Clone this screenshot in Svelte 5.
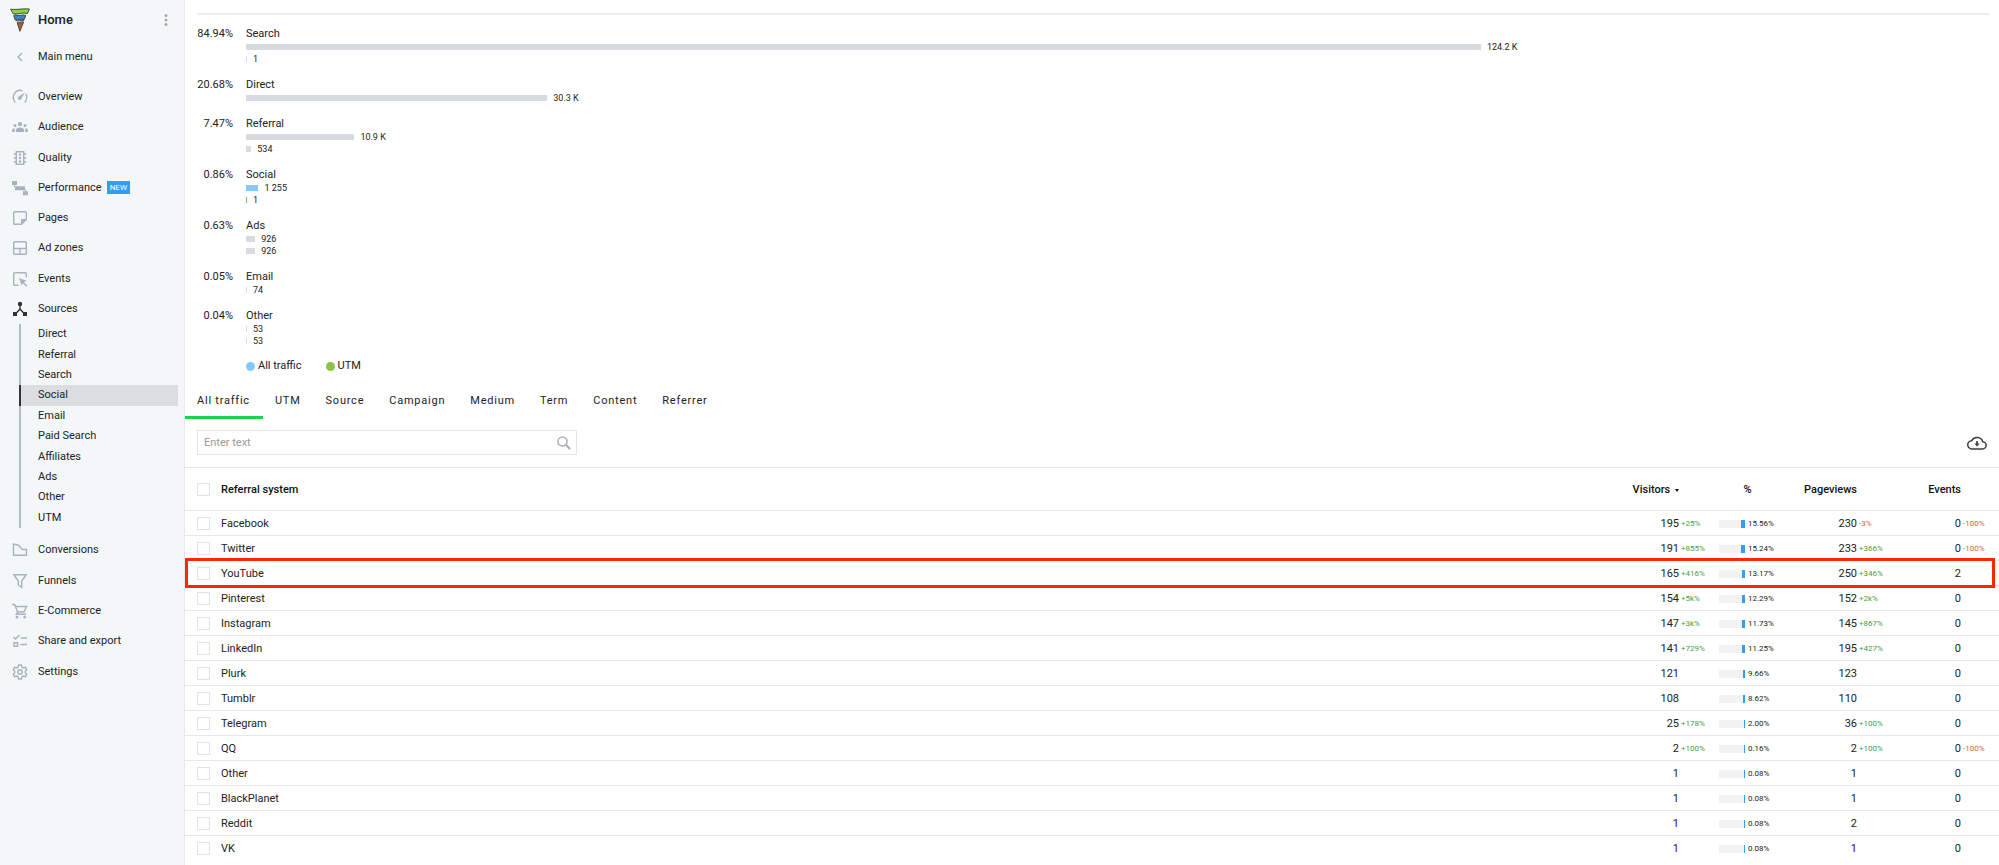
<script lang="ts">
  type Item = { label: string; icon: string; badge?: string };

  const topMenu: Item[] = [
    { label: "Overview", icon: "gauge" },
    { label: "Audience", icon: "people" },
    { label: "Quality", icon: "traffic" },
    { label: "Performance", icon: "steps", badge: "NEW" },
    { label: "Pages", icon: "page" },
    { label: "Ad zones", icon: "zones" },
    { label: "Events", icon: "cursor" },
    { label: "Sources", icon: "hub" },
  ];

  const sources = [
    "Direct",
    "Referral",
    "Search",
    "Social",
    "Email",
    "Paid Search",
    "Affiliates",
    "Ads",
    "Other",
    "UTM",
  ];

  const bottomMenu: Item[] = [
    { label: "Conversions", icon: "area" },
    { label: "Funnels", icon: "funnel" },
    { label: "E-Commerce", icon: "cart" },
    { label: "Share and export", icon: "checklist" },
    { label: "Settings", icon: "gear" },
  ];

  // line = stroked path, fill = solid path
  const icons: Record<string, { line?: string; fill?: string }> = {
    gauge: {
      line: "M3.4 13.4A7 7 0 0 1 10.6 1.8M13.7 4.6A7 7 0 0 1 12.6 13.4",
      fill: "M12.8 3.2 9.6 9.3A1.9 1.9 0 1 1 6.9 7.4Z",
    },
    people: {
      fill: "M8 3a2.1 2.1 0 1 1 0 4.2A2.1 2.1 0 0 1 8 3ZM3 5a1.5 1.5 0 1 1 0 3 1.5 1.5 0 0 1 0-3ZM13 5a1.5 1.5 0 1 1 0 3 1.5 1.5 0 0 1 0-3ZM3.8 13v-1.8C3.8 9.4 6 8.6 8 8.6s4.2.8 4.2 2.6V13ZM0 13v-1.6C0 10 1.4 9.3 3 9.3 2.6 10 2.6 11 2.6 13ZM16 13v-1.6C16 10 14.6 9.3 13 9.3c.4.7.4 1.7.4 3.7Z",
    },
    traffic: {
      line: "M4.3 1.7h7.4v12.6H4.3ZM1.8 4h2.5M1.8 8h2.5M1.8 12h2.5M11.7 4h2.5M11.7 8h2.5M11.7 12h2.5",
      fill: "M8 3.200a1.300 1.300 0 1 1 0 2.600 1.300 1.300 0 0 1 0-2.600ZM8 6.700a1.300 1.300 0 1 1 0 2.600 1.300 1.300 0 0 1 0-2.600ZM8 10.200a1.300 1.300 0 1 1 0 2.600 1.300 1.300 0 0 1 0-2.600Z",
    },
    steps: {
      fill: "M0 1h5v4H0ZM3 6.200h10v4H3ZM11 11.300h5v4h-5ZM2 5h1v2H2ZM13 9.500h1v2h-1Z",
    },
    page: {
      line: "M9.5 14.3H2.7a1 1 0 0 1-1-1V2.700a1 1 0 0 1 1-1h10.600a1 1 0 0 1 1 1v6.800Z",
      fill: "M9 9h6l-6 6Z",
    },
    zones: {
      line: "M2.7 1.7h10.6a1 1 0 0 1 1 1v10.6a1 1 0 0 1-1 1H2.700a1 1 0 0 1-1-1V2.700a1 1 0 0 1 1-1ZM1.700 8.500h12.600M8 8.500v5.800",
    },
    cursor: {
      line: "M6.500 14.300H2.700a1 1 0 0 1-1-1V2.700a1 1 0 0 1 1-1h10.600a1 1 0 0 1 1 1V6.500",
      fill: "M7 7l7.500 2.800-2.600 1.500L15.500 14.500l-1.200 1.200-3.300-3.500L9.700 14.700Z",
    },
    hub: {
      line: "M8 3v5L3.500 13M8 8l4.500 5",
      fill: "M8 .8a2.2 2.2 0 1 1 0 4.4A2.2 2.2 0 0 1 8 .8ZM1 11h4v4H1ZM11 11h4v4h-4Z",
    },
    area: {
      line: "M1.500 2v11.300h13V7.500H10.500C9 7.500 8.300 2.700 4.800 2.700Z",
    },
    funnel: {
      line: "M1.800 1.700h12.400L9.700 8v6.300L6.300 11.700V8Z",
    },
    cart: {
      line: "M0 1.500h2.600l3 7.500-1.400 2.300H14M3.500 3.500h11L12 9H5.600",
      fill: "M5 12.800a1.400 1.400 0 1 1 0 2.800 1.400 1.400 0 0 1 0-2.800ZM12.600 12.800a1.400 1.400 0 1 1 0 2.800 1.400 1.400 0 0 1 0-2.800Z",
    },
    checklist: {
      line: "M1.500 4l2 2L7.500 2M8.500 5H15M8.500 11.500H15M2 9.700h3.600v3.600H2Z",
    },
    gear: {
      line: "M6.600 1h2.800l.5 2 1.500.9 2-.6 1.400 2.400-1.500 1.500v1.600l1.500 1.500-1.400 2.400-2-.6-1.500.9-.5 2H6.600l-.5-2-1.500-.9-2 .6L1.200 10.300l1.500-1.500V7.200L1.200 5.700l1.400-2.400 2 .6L6.100 3ZM8 5.800a2.200 2.200 0 1 1 0 4.400 2.200 2.200 0 0 1 0-4.400Z",
    },
  };

  // longest bar takes this share of the track, in percent
  const BAR_SHARE = 70.85;
  const MAX_VALUE = 124200;

  type Bar = { value: number; text: string; kind?: string };
  const channels: { pct: string; name: string; bars: Bar[] }[] = [
    { pct: "84.94%", name: "Search", bars: [{ value: 124200, text: "124.2 K" }, { value: 1, text: "1" }] },
    { pct: "20.68%", name: "Direct", bars: [{ value: 30300, text: "30.3 K" }] },
    { pct: "7.47%", name: "Referral", bars: [{ value: 10900, text: "10.9 K" }, { value: 534, text: "534" }] },
    {
      pct: "0.86%",
      name: "Social",
      bars: [
        { value: 1255, text: "1 255", kind: "traffic" },
        { value: 1, text: "1", kind: "utm" },
      ],
    },
    { pct: "0.63%", name: "Ads", bars: [{ value: 926, text: "926" }, { value: 926, text: "926" }] },
    { pct: "0.05%", name: "Email", bars: [{ value: 74, text: "74" }] },
    { pct: "0.04%", name: "Other", bars: [{ value: 53, text: "53" }, { value: 53, text: "53" }] },
  ];

  const tabs = ["All traffic", "UTM", "Source", "Campaign", "Medium", "Term", "Content", "Referrer"];
  let activeTab = $state("All traffic");
  let query = $state("");

  type Row = {
    name: string;
    visitors: number;
    vDelta?: string;
    pct: string;
    views: number;
    pDelta?: string;
    events: number;
    eDelta?: string;
  };

  const rows: Row[] = [
    { name: "Facebook", visitors: 195, vDelta: "+25%", pct: "15.56", views: 230, pDelta: "-3%", events: 0, eDelta: "-100%" },
    { name: "Twitter", visitors: 191, vDelta: "+855%", pct: "15.24", views: 233, pDelta: "+366%", events: 0, eDelta: "-100%" },
    { name: "YouTube", visitors: 165, vDelta: "+416%", pct: "13.17", views: 250, pDelta: "+346%", events: 2 },
    { name: "Pinterest", visitors: 154, vDelta: "+5k%", pct: "12.29", views: 152, pDelta: "+2k%", events: 0 },
    { name: "Instagram", visitors: 147, vDelta: "+3k%", pct: "11.73", views: 145, pDelta: "+867%", events: 0 },
    { name: "LinkedIn", visitors: 141, vDelta: "+729%", pct: "11.25", views: 195, pDelta: "+427%", events: 0 },
    { name: "Plurk", visitors: 121, pct: "9.66", views: 123, events: 0 },
    { name: "Tumblr", visitors: 108, pct: "8.62", views: 110, events: 0 },
    { name: "Telegram", visitors: 25, vDelta: "+178%", pct: "2.00", views: 36, pDelta: "+100%", events: 0 },
    { name: "QQ", visitors: 2, vDelta: "+100%", pct: "0.16", views: 2, pDelta: "+100%", events: 0, eDelta: "-100%" },
    { name: "Other", visitors: 1, pct: "0.08", views: 1, events: 0 },
    { name: "BlackPlanet", visitors: 1, pct: "0.08", views: 1, events: 0 },
    { name: "Reddit", visitors: 1, pct: "0.08", views: 2, events: 0 },
    { name: "VK", visitors: 1, pct: "0.08", views: 1, events: 0 },
  ];

  const highlighted = "YouTube";
</script>

{#snippet icon(name: string)}
  <svg class="icon" viewBox="0 0 16 16" aria-hidden="true">
    {#if icons[name].line}
      <path d={icons[name].line} fill="none" stroke="currentColor" stroke-width="1.4" />
    {/if}
    {#if icons[name].fill}
      <path d={icons[name].fill} fill="currentColor" />
    {/if}
  </svg>
{/snippet}

{#snippet metric(value: number, delta: string | undefined)}
  <td class="num">
    <span>{value}</span><span class="delta" class:down={delta?.startsWith("-")}>{delta ?? ""}</span>
  </td>
{/snippet}

{#snippet menu(items: Item[])}
  {#each items as item}
    <li>
      <a class="menu-link" class:open={item.label === "Sources"} href="#{item.icon}">
        {@render icon(item.icon)}
        <span>{item.label}</span>
        {#if item.badge}<span class="badge">{item.badge}</span>{/if}
      </a>
    </li>
  {/each}
{/snippet}

<div class="layout">
  <aside class="sidebar">
    <div class="brand">
      <svg class="logo" viewBox="0 0 20 24" aria-hidden="true">
        <path d="M.6 1.200C6 2.200 14 .200 19.400 1L17.400 5.600C13 3.800 8 6.800 3.200 5.800Z" fill="#86d63c" stroke="#47503f" />
        <path d="M3.800 7.400 5.600 6.800C9 8.600 12 6 15.800 7.400L14.200 11.600C11 10.200 9 13 4.800 11.400Z" fill="#3f86c6" stroke="#3c474e" />
        <path d="M7.200 14.600C9 15.400 11 13.200 13.600 14L9.900 23.300Z" fill="#a0603c" stroke="#57423a" />
        <path d="M5.600 12.500C9 14 11 11.500 13.900 12.600" fill="none" stroke="#3c474e" />
      </svg>
      <strong>Home</strong>
      <button class="more" aria-label="More options">
        <svg viewBox="0 0 4 12" aria-hidden="true">
          <circle cx="2" cy="1.5" r="1.5" /><circle cx="2" cy="6" r="1.5" /><circle cx="2" cy="10.5" r="1.5" />
        </svg>
      </button>
    </div>

    <a class="menu-link back" href="#main">
      <svg class="icon" viewBox="0 0 16 16" aria-hidden="true">
        <path d="M10 4 6 8l4 4" fill="none" stroke="currentColor" stroke-width="1.4" />
      </svg>
      <span>Main menu</span>
    </a>

    <nav>
      <ul class="menu menu-top">
        {@render menu(topMenu)}
      </ul>
      <ul class="submenu">
        {#each sources as source}
          <li class:active={source === "Social"}><a href="#{source}">{source}</a></li>
        {/each}
      </ul>
      <ul class="menu menu-bottom">
        {@render menu(bottomMenu)}
      </ul>
    </nav>
  </aside>

  <main>
    <section class="chart">
      {#each channels as channel}
        <div class="channel">
          <span class="share">{channel.pct}</span>
          <div class="bars">
            <span class="name">{channel.name}</span>
            {#each channel.bars as bar}
              <div class="bar-row">
                <div class="bar {bar.kind ?? ''}" style="width: {(bar.value / MAX_VALUE) * BAR_SHARE}%"></div>
                <span>{bar.text}</span>
              </div>
            {/each}
          </div>
        </div>
      {/each}
      <div class="legend">
        <span><i class="dot traffic"></i>All traffic</span>
        <span><i class="dot utm"></i>UTM</span>
      </div>
    </section>

    <div class="tabs" role="tablist">
      {#each tabs as tab}
        <button role="tab" aria-selected={tab === activeTab} class:active={tab === activeTab} onclick={() => (activeTab = tab)}>
          {tab}
        </button>
      {/each}
    </div>

    <div class="toolbar">
      <label class="search">
        <input type="text" placeholder="Enter text" aria-label="Filter" bind:value={query} />
        <svg viewBox="0 0 14 14" aria-hidden="true">
          <circle cx="5.5" cy="5.5" r="4.5" fill="none" stroke="#a9b2bf" stroke-width="1.6" />
          <path d="M8.8 8.8 13 13" stroke="#a9b2bf" stroke-width="2.2" />
        </svg>
      </label>
      <button class="download" aria-label="Download">
        <svg viewBox="0 0 20 14" aria-hidden="true">
          <path d="M5 12.9H15.3a3.6 3.6 0 0 0 .5-7.2A6 6 0 0 0 4.7 4.7 4.1 4.1 0 0 0 5 12.9Z" fill="none" stroke="#3c3c3c" stroke-width="1.5" />
          <path d="M9.2 5h1.7v2.5h1.8L10 10.4 7.4 7.5h1.8Z" fill="#3c3c3c" />
        </svg>
      </button>
    </div>

    <table>
      <thead>
        <tr>
          <th class="check"><input type="checkbox" aria-label="Select all" /></th>
          <th class="system">Referral system</th>
          <th class="num visitors"><button>Visitors <i class="caret"></i></button></th>
          <th class="pct">%</th>
          <th class="num views">Pageviews</th>
          <th class="num events">Events</th>
        </tr>
      </thead>
      <tbody>
        {#each rows as row}
          <tr class:highlight={row.name === highlighted}>
            <td class="check"><input type="checkbox" aria-label="Select {row.name}" /></td>
            <td class="system">{row.name}</td>
            {@render metric(row.visitors, row.vDelta)}
            <td class="pct">
              <div class="pct-cell">
                <span class="meter"><span style="width: {row.pct}%"></span></span>
                <span>{row.pct}%</span>
              </div>
            </td>
            {@render metric(row.views, row.pDelta)}
            {@render metric(row.events, row.eDelta)}
          </tr>
        {/each}
      </tbody>
    </table>
  </main>
</div>

<style>
  :global(body) {
    margin: 0;
    background: #fff;
  }

  .layout {
    display: flex;
    min-height: 100vh;
    font-family: Roboto, "Liberation Sans", sans-serif;
    font-size: 11px;
    line-height: 14px;
    color: #222;
  }

  a {
    color: inherit;
    text-decoration: none;
  }

  button {
    padding: 0;
    border: 0;
    background: none;
    font: inherit;
    color: inherit;
    cursor: pointer;
  }

  ul {
    margin: 0;
    padding: 0;
    list-style: none;
  }

  /* sidebar */
  .sidebar {
    flex: none;
    box-sizing: border-box;
    width: 185px;
    background: #f3f7f8;
    border-right: 1px solid #e6eaec;
  }

  .brand {
    display: flex;
    align-items: center;
    height: 40px;
    padding: 0 16px 0 10px;
  }

  .brand strong {
    flex: 1;
    margin-left: 8px;
    font-size: 13px;
    font-weight: 500;
  }

  .logo {
    width: 20px;
    height: 24px;
  }

  .more {
    display: flex;
  }

  .more svg {
    width: 4px;
    height: 12px;
    fill: #a3abb5;
  }

  .menu-link {
    display: flex;
    align-items: center;
    gap: 10px;
    height: 100%;
    padding-left: 12px;
  }

  .back {
    height: 34px;
    margin-bottom: 8px;
  }

  .icon {
    width: 16px;
    height: 16px;
    color: #a9b2bd;
  }

  .open .icon {
    color: #333;
  }

  .menu {
    display: grid;
  }

  .menu-top {
    min-height: 242px;
  }

  .menu-bottom {
    min-height: 152px;
    margin-top: 7px;
  }

  .badge {
    margin-left: -5px;
    padding: 0 3px;
    background: #319ef5;
    color: #fff;
    font-size: 8px;
    line-height: 13px;
  }

  .submenu {
    display: grid;
    min-height: 204px;
    margin: 0 6px 0 19px;
  }

  .submenu li {
    display: flex;
    align-items: center;
    padding-left: 17px;
    border-left: 2px solid #b5bec8;
  }

  .submenu .active {
    background: #dcdddf;
    border-left-color: #333;
  }

  main {
    flex: 1;
    min-width: 0;
    padding-top: 13px;
  }

  /* channel chart */
  .chart {
    display: flex;
    flex-direction: column;
    gap: 13px;
    margin: 0 10px 0 12px;
    padding-top: 12px;
    border-top: 2px solid #ededed;
  }

  .channel {
    display: grid;
    grid-template-columns: 36px 1fr;
    column-gap: 13px;
  }

  .share {
    text-align: right;
  }

  .bars {
    display: flex;
    flex-direction: column;
  }

  .bar-row {
    display: flex;
    align-items: center;
    gap: 6px;
    font-size: 9px;
    line-height: 12px;
  }

  .bar {
    flex: none;
    min-width: 1px;
    height: 6px;
    background: #d7dae0;
  }

  .traffic {
    background: #85c8fd;
  }

  .utm {
    background: #8bc34a;
  }

  .legend {
    display: flex;
    gap: 24px;
    margin: -1px 0 0 49px;
  }

  .legend span {
    display: flex;
    align-items: center;
    gap: 3px;
  }

  .dot {
    width: 9px;
    height: 9px;
    border-radius: 50%;
  }

  /* tabs */
  .tabs {
    display: flex;
    margin-top: 12px;
  }

  .tabs button {
    padding: 1px 13px 0 12px;
    border-bottom: 3px solid transparent;
    letter-spacing: 0.07em;
    line-height: 30px;
  }

  .tabs .active {
    border-bottom-color: #21cf42;
  }

  .toolbar {
    display: flex;
    align-items: center;
    justify-content: space-between;
    padding: 11px 12px 12px;
  }

  .search {
    display: flex;
    align-items: center;
    box-sizing: border-box;
    width: 380px;
    padding: 0 5px 0 6px;
    border: 1px solid #e4e6ea;
  }

  .search input {
    flex: 1;
    min-width: 0;
    height: 23px;
    padding: 0;
    border: 0;
    outline: 0;
    background: none;
    font: inherit;
    color: inherit;
  }

  .search input::placeholder {
    color: #999;
  }

  .search svg {
    width: 14px;
    height: 14px;
  }

  .download {
    display: flex;
  }

  .download svg {
    width: 20px;
    height: 14px;
  }

  /* table */
  table {
    width: 100%;
    table-layout: fixed;
    border-collapse: separate;
    border-spacing: 0;
    border-top: 1px solid #e8e8e8;
  }

  th,
  td {
    box-sizing: border-box;
    padding: 2px 0 0;
    border-bottom: 1px solid #e8e8e8;
    text-align: left;
    white-space: nowrap;
  }

  th {
    height: 43px;
    font-weight: 500;
    color: #111;
  }

  td {
    height: 25px;
  }

  tbody tr:last-child td {
    border-bottom-color: transparent;
  }

  .check {
    width: 36px;
    padding: 0 0 0 12px;
  }

  .check input {
    display: block;
    appearance: none;
    box-sizing: border-box;
    width: 13px;
    height: 13px;
    margin: 0;
    border: 1px solid #e0e3e8;
    background: #fff;
  }

  .visitors {
    width: 117px;
  }

  th.pct {
    width: 63px;
    padding-right: 2px;
    text-align: center;
  }

  .views {
    width: 115px;
  }

  .events {
    width: 104px;
  }

  .num {
    text-align: right;
  }

  th.num {
    padding-right: 38px;
  }

  .caret {
    display: inline-block;
    margin-left: 2px;
    border: 2px solid transparent;
    border-top: 3px solid #111;
    border-bottom: 0;
    vertical-align: middle;
  }

  .delta {
    display: inline-block;
    box-sizing: border-box;
    width: 38px;
    padding-left: 2px;
    text-align: left;
    vertical-align: top;
    font-size: 8px;
    color: #43a047;
  }

  .delta.down {
    color: #dd5a3c;
  }

  .pct-cell {
    display: flex;
    align-items: center;
    gap: 3px;
    padding-left: 2px;
    font-size: 8px;
  }

  .meter {
    display: flex;
    justify-content: flex-end;
    width: 26px;
    height: 8px;
    background: #f2f2f2;
  }

  .meter span {
    min-width: 1px;
    background: #319ef5;
  }

  .highlight {
    position: relative;
  }

  .highlight .check::after {
    content: "";
    position: absolute;
    inset: -3px 4px -2px 0;
    border: 3px solid #ff2600;
    pointer-events: none;
  }
</style>
